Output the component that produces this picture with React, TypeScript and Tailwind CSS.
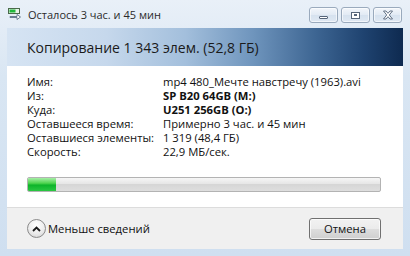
import React from "react";

const font = { fontFamily: '"Open Sans", "Noto Sans", sans-serif' };

function CaptionBtn({ children }: { children: React.ReactNode }) {
  return (
    <div className="w-[29px] h-[16px] rounded-[3px] border border-[#9aaabd] bg-[linear-gradient(180deg,#f2f6fb_0%,#e2eaf4_50%,#d6e2ef_51%,#dfe8f3_100%)] flex items-center justify-center shadow-[inset_0_0_0_1px_rgba(255,255,255,0.6)]">
      {children}
    </div>
  );
}

export default function App() {
  const rows: [string, string, boolean][] = [
    ["Имя:", "mp4 480_Мечте навстречу (1963).avi", false],
    ["Из:", "SP B20 64GB (M:)", true],
    ["Куда:", "U251 256GB (O:)", true],
    ["Оставшееся время:", "Примерно 3 час. и 45 мин", false],
    ["Оставшиеся элементы:", "1 319 (48,4 ГБ)", false],
    ["Скорость:", "22,9 МБ/сек.", false],
  ];
  return (
    <div
      className="w-[410px] h-[256px] flex flex-col bg-[linear-gradient(180deg,#e9f0f8_0%,#d9e6f3_30%,#cfdff0_100%)] overflow-hidden"
      style={font}
    >
      {/* title bar */}
      <div className="h-[28px] flex items-center pl-[8px] pr-[8px]">
        <svg width="14" height="12" viewBox="0 0 14 12" className="mr-[6px]">
          <rect x="0.5" y="0.5" width="11" height="5" fill="#e8f3e8" stroke="#4a6a4a" strokeWidth="1" />
          <rect x="1.5" y="1.5" width="6" height="3" fill="#1fb83a" />
          <path d="M2 8.5 H9 V6.5 L12.5 9 L9 11.5 V9.5 H2 Z" fill="#ffffff" stroke="#5a6f88" strokeWidth="0.9" strokeLinejoin="round" />
        </svg>
        <span className="text-[11px] text-[#2b2b2b] leading-none">Осталось 3 час. и 45 мин</span>
        <div className="ml-auto flex gap-[3px] mt-[2px]">
          <CaptionBtn>
            <div className="w-[9px] h-[3px] bg-white border border-[#56657a] rounded-[1px] mt-[4px]" />
          </CaptionBtn>
          <CaptionBtn>
            <div className="w-[9px] h-[7px] bg-white border border-[#56657a] flex items-center justify-center">
              <div className="w-[3px] h-[1px] border border-[#56657a]" />
            </div>
          </CaptionBtn>
          <CaptionBtn>
            <svg width="12" height="10" viewBox="0 0 12 10">
              <path d="M1.5 1 L4 1 L6 3.3 L8 1 L10.5 1 L7.3 5 L10.5 9 L8 9 L6 6.7 L4 9 L1.5 9 L4.7 5 Z" fill="#ffffff" stroke="#56657a" strokeWidth="0.9" strokeLinejoin="round" />
            </svg>
          </CaptionBtn>
        </div>
      </div>

      {/* client */}
      <div className="mx-[7px] flex flex-col">
        <div className="h-[38px] flex items-center pl-[20px] bg-[linear-gradient(90deg,#d6e4f3_0%,#c6d8ec_25%,#a3bfdc_45%,#6f95bd_62%,#3d6592_78%,#1f4370_90%,#0e2a50_100%)]">
          <span className="text-[14px] text-[#1a1a1a] leading-none mt-[2px]">Копирование 1 343 элем. (52,8 ГБ)</span>
        </div>
        <div className="h-[141px] bg-white pl-[20px] pt-[9px]">
          <div className="grid grid-cols-[136px_1fr] text-[11.25px] text-[#111] leading-[14px]">
            {rows.map(([l, v, b]) => (
              <React.Fragment key={l}>
                <div>{l}</div>
                <div className={b ? "font-bold" : ""}>{v}</div>
              </React.Fragment>
            ))}
          </div>
          <div className="mt-[18px] w-[354px] h-[15px] rounded-[2px] border border-[#b3b3b3] bg-[linear-gradient(180deg,#f6f6f6_0%,#e6e6e6_45%,#d6d6d6_50%,#dedede_100%)] overflow-hidden">
            <div className="h-full w-[28px] bg-[linear-gradient(180deg,#a6eea6_0%,#4fd44f_40%,#0db42a_55%,#2ac742_100%)]" />
          </div>
        </div>
        <div className="h-[42px] border-t border-[#dcdcdc] bg-[#f0f0f0] flex items-center pl-[20px] pr-[22px]">
          <div className="w-[19px] h-[19px] rounded-full border border-[#8a8a8a] bg-[radial-gradient(circle_at_50%_30%,#ffffff_0%,#eaeaea_60%,#cfcfcf_100%)] flex items-center justify-center">
            <svg width="9" height="6" viewBox="0 0 9 6">
              <path d="M1 5 L4.5 1.5 L8 5" fill="none" stroke="#1a1a1a" strokeWidth="1.8" />
            </svg>
          </div>
          <span className="ml-[2px] text-[11.25px] text-[#111] leading-none">Меньше сведений</span>
          <div className="ml-auto w-[72px] h-[22px] rounded-[3px] border border-[#707070] bg-[linear-gradient(180deg,#f2f2f2_0%,#ebebeb_50%,#dddddd_51%,#cfcfcf_100%)] flex items-center justify-center shadow-[inset_0_0_0_1px_rgba(255,255,255,0.7)]">
            <span className="text-[11.25px] text-[#111] leading-none">Отмена</span>
          </div>
        </div>
      </div>
    </div>
  );
}
